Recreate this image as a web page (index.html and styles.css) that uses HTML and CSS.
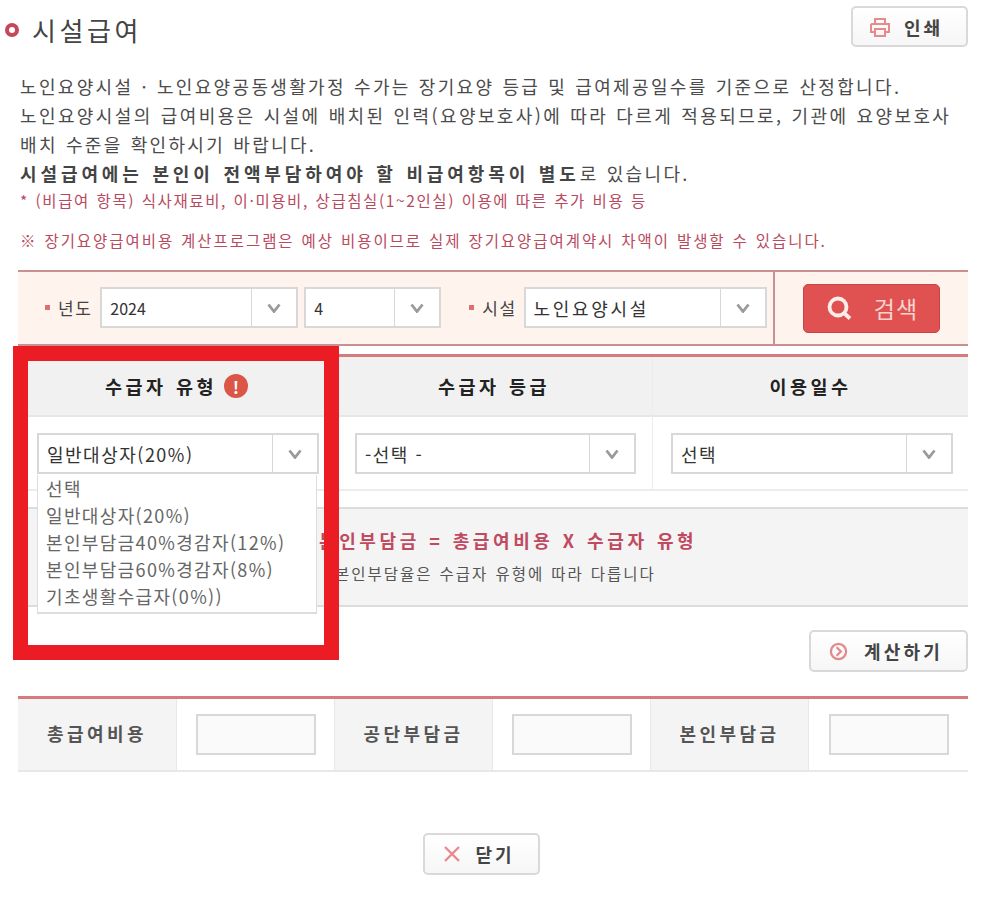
FILE: index.html
```html
<!DOCTYPE html>
<html lang="ko">
<head>
<meta charset="utf-8">
<title>시설급여</title>
<link rel="stylesheet" href="styles.css">
</head>
<body>
<main class="page">
  <header class="head">
    <h1 class="title"><span class="ring"></span>시설급여</h1>
    <a class="btn btn-print">
      <svg viewBox="0 0 20 20" width="20" height="20" fill="none" stroke="#e88a8c" stroke-width="2"><path d="M5 7V2h10v5M1 7h18v8h-4M5 15H1V7M5 12h10v7H5z"/></svg>
      <span>인쇄</span>
    </a>
  </header>

  <section class="intro">
    <p>노인요양시설 · 노인요양공동생활가정 수가는 장기요양 등급 및 급여제공일수를 기준으로 산정합니다.</p>
    <p class="tight">노인요양시설의 급여비용은 시설에 배치된 인력(요양보호사)에 따라 다르게 적용되므로, 기관에 요양보호사</p>
    <p>배치 수준을 확인하시기 바랍니다.</p>
    <p><strong>시설급여에는 본인이 전액부담하여야 할 비급여항목이 별도</strong>로 있습니다.</p>
    <p class="note">* (비급여 항목) 식사재료비, 이·미용비, 상급침실(1~2인실) 이용에 따른 추가 비용 등</p>
    <p class="warn">※ 장기요양급여비용 계산프로그램은 예상 비용이므로 실제 장기요양급여계약시 차액이 발생할 수 있습니다.</p>
  </section>

  <section class="search">
    <div class="filters">
      <span class="lab lab-year">년도</span>
      <div class="sel sel-year"><span class="val num">2024</span><i class="arr"><svg viewBox="0 0 14 10" width="14" height="10"><path d="M1.500 1.500L7 8.500l5.500-7" fill="none" stroke="#9a9a9a" stroke-width="2.800"/></svg></i></div>
      <div class="sel sel-month"><span class="val num">4</span><i class="arr"><svg viewBox="0 0 14 10" width="14" height="10"><path d="M1.500 1.500L7 8.500l5.500-7" fill="none" stroke="#9a9a9a" stroke-width="2.800"/></svg></i></div>
      <span class="lab lab-fac">시설</span>
      <div class="sel sel-fac"><span class="val">노인요양시설</span><i class="arr"><svg viewBox="0 0 14 10" width="14" height="10"><path d="M1.500 1.500L7 8.500l5.500-7" fill="none" stroke="#9a9a9a" stroke-width="2.800"/></svg></i></div>
    </div>
    <div class="search-side">
      <a class="btn-search">
        <svg viewBox="0 0 28 28" width="28" height="28" fill="none" stroke="#fdeeea" stroke-width="3.800"><circle cx="13" cy="13" r="8.500"/><path d="M19 19l6 5.500"/></svg>
        <span>검색</span>
      </a>
    </div>
  </section>

  <section class="calc">
    <div class="calc-col">
      <div class="calc-head">수급자 유형<span class="alert">!</span></div>
      <div class="calc-body"><div class="sel sel-full"><span class="val">일반대상자(20%)</span><i class="arr"><svg viewBox="0 0 14 10" width="14" height="10"><path d="M1.500 1.500L7 8.500l5.500-7" fill="none" stroke="#9a9a9a" stroke-width="2.800"/></svg></i></div></div>
    </div>
    <div class="calc-col">
      <div class="calc-head">수급자 등급</div>
      <div class="calc-body"><div class="sel sel-full"><span class="val">-선택 -</span><i class="arr"><svg viewBox="0 0 14 10" width="14" height="10"><path d="M1.500 1.500L7 8.500l5.500-7" fill="none" stroke="#9a9a9a" stroke-width="2.800"/></svg></i></div></div>
    </div>
    <div class="calc-col">
      <div class="calc-head">이용일수</div>
      <div class="calc-body"><div class="sel sel-full"><span class="val">선택</span><i class="arr"><svg viewBox="0 0 14 10" width="14" height="10"><path d="M1.500 1.500L7 8.500l5.500-7" fill="none" stroke="#9a9a9a" stroke-width="2.800"/></svg></i></div></div>
    </div>
  </section>

  <section class="formula">
    <p class="f-main">본인부담금 = 총급여비용 X 수급자 유형</p>
    <p class="f-sub">본인부담율은 수급자 유형에 따라 다릅니다</p>
  </section>

  <div class="calc-action">
    <a class="btn btn-calc">
      <svg viewBox="0 0 20 20" width="19" height="19" fill="none" stroke="#e28a8c" stroke-width="2.400"><circle cx="10" cy="10" r="8"/><path d="M8 5.500l4.500 4.500L8 14.500"/></svg>
      <span>계산하기</span>
    </a>
  </div>

  <section class="result">
    <div class="r-th">총급여비용</div><div class="r-td"><input class="r-input" type="text"></div>
    <div class="r-th">공단부담금</div><div class="r-td"><input class="r-input" type="text"></div>
    <div class="r-th">본인부담금</div><div class="r-td"><input class="r-input" type="text"></div>
  </section>

  <div class="close-row">
    <a class="btn btn-close">
      <svg viewBox="0 0 18 18" width="18" height="18" fill="none" stroke="#e88a8c" stroke-width="2.400"><path d="M2 2l14 14M16 2L2 16"/></svg>
      <span>닫기</span>
    </a>
  </div>

  <ul class="dropdown">
    <li>선택</li>
    <li>일반대상자(20%)</li>
    <li>본인부담금40%경감자(12%)</li>
    <li>본인부담금60%경감자(8%)</li>
    <li>기초생활수급자(0%))</li>
  </ul>
  <div class="highlight"></div>
</main>
</body>
</html>
```

FILE: styles.css
```css
* { box-sizing: border-box; }
html, body { margin: 0; padding: 0; background: #fff; }
body {
  font-family: "Noto Sans CJK KR", "Noto Sans", sans-serif;
  color: #444;
  height: 897px;
  overflow: hidden;
}
p, h1, ul { margin: 0; padding: 0; }
.page { position: relative; width: 988px; height: 897px; padding: 6px 20px 0 18px; }

.head { display: flex; justify-content: space-between; align-items: flex-start; height: 41px; }
.title {
  display: flex; align-items: center; gap: 13px; margin: 4px 0 0 -13px;
  font-size: 26px; font-weight: 400; line-height: 40px; letter-spacing: 3.600px; color: #444;
}
.ring { width: 14px; height: 14px; border: 4px solid #c5485a; border-radius: 50%; }
.btn {
  display: flex; align-items: center; justify-content: center;
  background: linear-gradient(#fff, #f6f6f6);
  border: 2px solid #d9d9d9; border-radius: 5px;
  font-weight: 700; color: #444; letter-spacing: 3px; font-size: 18px;
}
.btn-print { width: 117px; height: 41px; gap: 14px; padding-right: 6px; }

.intro { margin: 25px 0 0 2px; font-size: 18px; line-height: 29px; letter-spacing: 2.340px; word-spacing: .7px; color: #4b4b4b; white-space: nowrap; }
.intro .tight { letter-spacing: 2.390px; }
.intro strong { font-weight: 700; letter-spacing: 3.900px; color: #444; }
.note { font-size: 15.500px; line-height: 24px; color: #b84a60; letter-spacing: 1.600px; }
.warn { font-size: 15.500px; line-height: 24px; color: #b84a60; letter-spacing: 1.950px; margin-top: 16px; }

.search {
  display: flex; height: 76px; margin-top: 18px;
  background: #fff3ee;
  border-top: 2px solid #c99292; border-bottom: 2px solid #c99292;
}
.filters { flex: 1; display: flex; align-items: center; padding-bottom: 1px; border-right: 2px solid #c99292; }
.search-side { width: 193px; display: flex; align-items: center; padding-left: 28px; }
.lab { display: flex; align-items: center; font-size: 17px; letter-spacing: 1.500px; color: #444; white-space: nowrap; }
.lab::before { content: ""; width: 5px; height: 5px; margin-right: 8px; background: #dd6f70; }
.lab-year { margin-left: 27px; margin-right: 8px; }
.lab-fac { margin-left: 28px; margin-right: 7px; }
.sel {
  display: flex; align-items: stretch; height: 41px;
  background: #fff; border: 2px solid #d8d8d8; color: #333; font-size: 18px;
}
.val { flex: 1; display: flex; align-items: center; padding-left: 8px; white-space: nowrap; letter-spacing: 1.500px; }
.num { font-size: 16px; letter-spacing: 0; }
.arr { width: 45px; display: flex; align-items: center; justify-content: center; border-left: 1px solid #d8d8d8; }
.sel-year { width: 198px; }
.sel-month { width: 137px; margin-left: 6px; }
.sel-fac { width: 243px; }
.sel-fac .val { letter-spacing: 2.700px; }
.btn-search {
  width: 137px; height: 49px; display: flex; align-items: center; justify-content: center; gap: 21px;
  background: #e05252; border: 1px solid #c94444; border-radius: 5px;
  color: #f9d3cf; font-size: 23px; font-weight: 400; letter-spacing: 1px;
}

.calc { display: grid; grid-template-columns: 317px 317px 316px; margin-top: 8px; border-top: 3px solid #d67a7c; }
.calc-col + .calc-col { border-left: 1px solid #ececec; }
.calc-head {
  height: 60px; display: flex; align-items: center; justify-content: center; gap: 7px;
  background: #f1f1f1; border-bottom: 2px solid #e6e6e6;
  font-size: 18.500px; font-weight: 700; color: #222; letter-spacing: 3.500px; word-spacing: .7px;
}
.alert {
  width: 24px; height: 24px; border-radius: 50%; background: #dc5648; color: #fff;
  display: flex; align-items: center; justify-content: center; font-size: 17px; letter-spacing: 0;
}
.calc-body { height: 74px; padding: 16px 16px 0 19px; border-bottom: 2px solid #ececec; }
.calc-col:last-child .calc-body { padding-left: 18px; padding-right: 15px; }
.sel-full { width: 100%; }

.formula {
  height: 100px; margin-top: 16px; padding: 16px 0 0 301px;
  background: #f4f4f4; border-top: 2px solid #dcdcdc; border-bottom: 2px solid #dcdcdc;
}
.f-main { font-size: 18px; font-weight: 700; line-height: 30px; color: #c04a60; letter-spacing: 3.600px; word-spacing: .7px; }
.f-sub { font-size: 15.500px; line-height: 30px; color: #555; letter-spacing: 2px; word-spacing: .7px; margin-top: 3px; padding-left: 16px; }

.calc-action { display: flex; justify-content: flex-end; margin-top: 23px; }
.btn-calc { width: 159px; height: 42px; gap: 16px; letter-spacing: 3.200px; padding-right: 5px; }

.result {
  display: grid; grid-template-columns: 159px 158px 158px 158px 158px 159px;
  margin-top: 24px; height: 76px;
  border-top: 3px solid #d67a7c; border-bottom: 2px solid #e8e8e8;
}
.r-th {
  display: flex; align-items: center; justify-content: center; padding-bottom: 3px;
  background: #f4f4f4; border-right: 1px solid #e8e8e8;
  font-size: 18px; font-weight: 700; color: #555; letter-spacing: 3.400px;
}
.r-td { display: flex; align-items: center; justify-content: center; border-right: 1px solid #e8e8e8; }
.r-td:last-child { border-right: 0; }
.r-input { width: 120px; height: 41px; border: 2px solid #d8d8d8; background: #fafafa; }

.close-row { display: flex; justify-content: center; margin-top: 61px; padding-right: 23px; }
.btn-close { width: 117px; height: 42px; gap: 14px; padding-right: 5px; }

.dropdown {
  position: absolute; left: 37px; top: 475px; width: 280px; height: 139px;
  list-style: none; padding: 0 0 0 8px;
  background: #fff; border: 1px solid #ddd; border-top: 0; border-bottom-width: 2px;
  font-size: 18px; line-height: 27px; color: #666; letter-spacing: 1.350px;
}
.highlight {
  position: absolute; left: 13px; top: 346px; width: 326px; height: 314px;
  border: 15px solid #ec1c24; pointer-events: none;
}
```
